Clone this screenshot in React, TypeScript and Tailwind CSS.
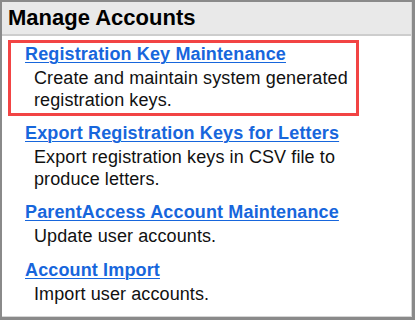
const items = [
  {
    title: "Registration Key Maintenance",
    text: "Create and maintain system generated registration keys.",
    active: true,
  },
  {
    title: "Export Registration Keys for Letters",
    text: "Export registration keys in CSV file to produce letters.",
  },
  {
    title: "ParentAccess Account Maintenance",
    text: "Update user accounts.",
  },
  {
    title: "Account Import",
    text: "Import user accounts.",
  },
];

export default function App() {
  return (
    <div
      className="w-[415px] h-[320px] bg-white border-l-2 border-t-2 border-r-[3px] border-b-[3px] border-[#8a8a8a]"
      style={{ fontFamily: '"Liberation Sans", Arial, sans-serif' }}
    >
      <div className="h-full border-r border-b border-[#d6d6d6]">
        <div className="h-[34px] bg-[#e9e9e9] border-b-2 border-[#cdcdcd] pl-[6px]">
          <h1 className="text-[22px] leading-[32px] font-bold text-black">Manage Accounts</h1>
        </div>

        <ul className="pl-[6px] pt-[4px] flex flex-col gap-[3px]">
          {items.map((item) => (
            <li
              key={item.title}
              className={
                item.active
                  ? "w-[351px] border-[3px] border-[#f24444] pl-[14px] pb-[2px]"
                  : "w-[351px] border-[3px] border-transparent pl-[14px] pb-[2px]"
              }
            >
              <a
                href="#"
                className="block text-[18px] leading-[22px] font-bold tracking-[0.14px] text-[#1766dc] underline decoration-1 underline-offset-2"
              >
                {item.title}
              </a>
              <p className="mt-[3px] pl-[9px] pr-[6px] text-[18px] leading-[21.5px] tracking-[0.1px] text-[#111]">
                {item.text}
              </p>
            </li>
          ))}
        </ul>
      </div>
    </div>
  );
}
